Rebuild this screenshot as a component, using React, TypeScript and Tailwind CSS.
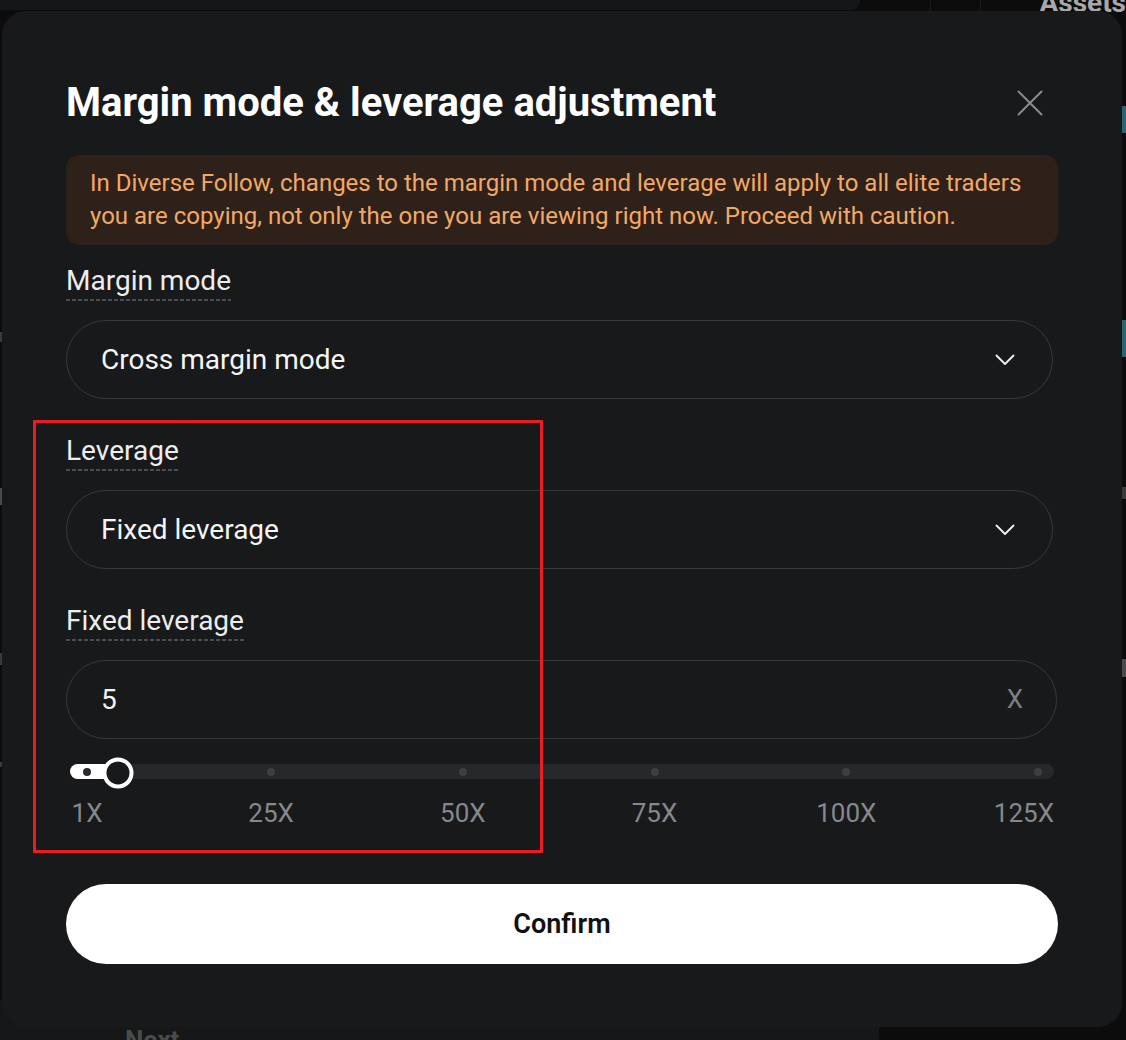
import clsx from "clsx";

const marks = [1, 25, 50, 75, 100, 125];
const value = 5;

// slider spans 17px..968px inside a 984px track
function markPos(v: number) {
  return 17 + ((v - 1) / 124) * 951;
}

function FieldLabel({ text }: { text: string }) {
  return (
    <div className="flex">
      <span className="inline-block bg-[repeating-linear-gradient(90deg,#4b4c4f_0px,#4b4c4f_4px,transparent_4px,transparent_6px)] bg-[length:100%_2px] bg-bottom bg-no-repeat pb-[4px] text-[28px] leading-[32px] text-[#ededed]">
        {text}
      </span>
    </div>
  );
}

function Chevron() {
  return (
    <svg width="20" height="12" viewBox="0 0 20 12" fill="none">
      <path d="M1.5 1.5 10 10 18.5 1.5" stroke="#f2f2f2" strokeWidth="1.8" strokeLinecap="round" strokeLinejoin="round" />
    </svg>
  );
}

function SelectBox({ text }: { text: string }) {
  return (
    <div className="flex h-[79px] w-[987px] items-center justify-between rounded-full border border-[#37383b] pl-[34px] pr-[37px]">
      <span className="text-[28px] text-[#f5f5f5]">{text}</span>
      <Chevron />
    </div>
  );
}

function LeverageSlider() {
  return (
    <div className="ml-[4px] mt-[25px] w-[984px]">
      <div className="relative h-[15px] rounded-full bg-[#27282b]">
        <div
          className="absolute left-0 top-0 h-full rounded-l-full bg-white"
          style={{ width: markPos(value) }}
        />
        {marks.map((m) => (
          <span
            key={m}
            className={clsx(
              "absolute top-1/2 h-2 w-2 -translate-x-1/2 -translate-y-1/2 rounded-full",
              m <= value ? "bg-[#2a2b2e]" : "bg-[#3e3f43]"
            )}
            style={{ left: markPos(m) }}
          />
        ))}
        <span
          className="absolute top-1/2 h-[31px] w-[31px] -translate-x-1/2 -translate-y-[47%] rounded-full border-4 border-white bg-[#18191b]"
          style={{ left: markPos(value) }}
        />
      </div>
      <div className="relative mt-[19px] h-[30px] text-[26px] leading-[30px] text-[#87888b]">
        {marks.map((m, i) =>
          i === marks.length - 1 ? (
            <span key={m} className="absolute right-0 top-0">
              {m}X
            </span>
          ) : (
            <span
              key={m}
              className="absolute top-0 -translate-x-1/2"
              style={{ left: markPos(m) }}
            >
              {m}X
            </span>
          )
        )}
      </div>
    </div>
  );
}

export default function App() {
  return (
    <div className="relative h-[1040px] w-full overflow-hidden bg-[#0c0c0d] font-['Roboto','Liberation_Sans',sans-serif]">

      {/* page behind the dialog */}
      <div className="flex h-full flex-col">

        <div className="flex h-[20px]">
          <div className="h-[10px] w-[873px] rounded-br-[8px] bg-[#151618]" />
          <div className="ml-[70px] h-full w-px bg-[#19191b]" />
          <div className="ml-[49px] h-full w-px bg-[#19191b]" />
          <div className="-mt-[13px] ml-[58px] text-[28px] font-bold leading-[32px] text-[#a8a8a8]">
            Assets
          </div>
        </div>

        <div className="flex flex-1 justify-between">
          <div className="flex w-[2px] flex-col">
            <div className="mt-[312px] h-[10px] bg-[#3a3a3c]" />
            <div className="mt-[146px] h-[17px] bg-[#4a4a4c]" />
            <div className="mt-[148px] h-[12px] bg-[#3a3a3c]" />
            <div className="mt-[97px] h-[5px] bg-[#3a3a3c]" />
          </div>
          <div className="flex w-[4px] flex-col">
            <div className="mt-[86px] h-[27px] bg-[#2b6574]" />
            <div className="mt-[187px] h-[37px] bg-[#2b6574]" />
            <div className="mt-[130px] h-[12px] bg-[#3a3a3c]" />
            <div className="mt-[160px] h-[18px] bg-[#4a4a4c]" />
          </div>
        </div>

        <div className="flex h-[40px]">
          <div className="w-[879px] bg-[#161718] pl-[125px] pt-[27px] text-[26px] font-bold leading-none text-[#4a4b4d]">
            Next
          </div>
        </div>

      </div>

      {/* dialog */}
      <div className="absolute left-[2px] top-[11px] h-[1016px] w-[1120px] rounded-[24px] bg-[#18191b] px-16 pt-[68px]">

        <div className="flex items-center justify-between">
          <h2 className="text-[40px] font-bold leading-[48px] text-white">
            Margin mode &amp; leverage adjustment
          </h2>
          <button className="mr-[15px]">
            <svg width="26" height="26" viewBox="0 0 26 26" fill="none">
              <path d="M1.5 1.5 24.5 24.5M24.5 1.5 1.5 24.5" stroke="#8a8b8d" strokeWidth="2" strokeLinecap="round" />
            </svg>
          </button>
        </div>

        <div className="mt-[28px] rounded-[14px] bg-[#2e2119] px-6 py-3 text-[24px] leading-[33px] text-[#f3a865]">
          In Diverse Follow, changes to the margin mode and leverage will apply to all elite traders
          you are copying, not only the one you are viewing right now. Proceed with caution.
        </div>

        <div className="mt-[20px]">
          <FieldLabel text="Margin mode" />
        </div>
        <div className="mt-[19px]">
          <SelectBox text="Cross margin mode" />
        </div>

        <div className="mt-[36px]">
          <FieldLabel text="Leverage" />
        </div>
        <div className="mt-[19px]">
          <SelectBox text="Fixed leverage" />
        </div>

        <div className="mt-[36px]">
          <FieldLabel text="Fixed leverage" />
        </div>
        <div className="mt-[19px] flex h-[79px] w-[991px] items-center justify-between rounded-full border border-[#37383b] pl-[34px] pr-[33px]">
          <span className="text-[28px] text-[#f2f2f2]">5</span>
          <span className="text-[26px] text-[#7d7e81]">X</span>
        </div>

        <LeverageSlider />

        <button className="mt-[56px] flex h-[80px] w-full items-center justify-center rounded-full bg-white text-[27px] font-semibold text-[#111111]">
          Confirm
        </button>

      </div>

      {/* red highlight annotation over the leverage section */}
      <div className="absolute left-[33px] top-[420px] h-[433px] w-[510px] border-[3px] border-[#ec1c24]" />
    </div>
  );
}
